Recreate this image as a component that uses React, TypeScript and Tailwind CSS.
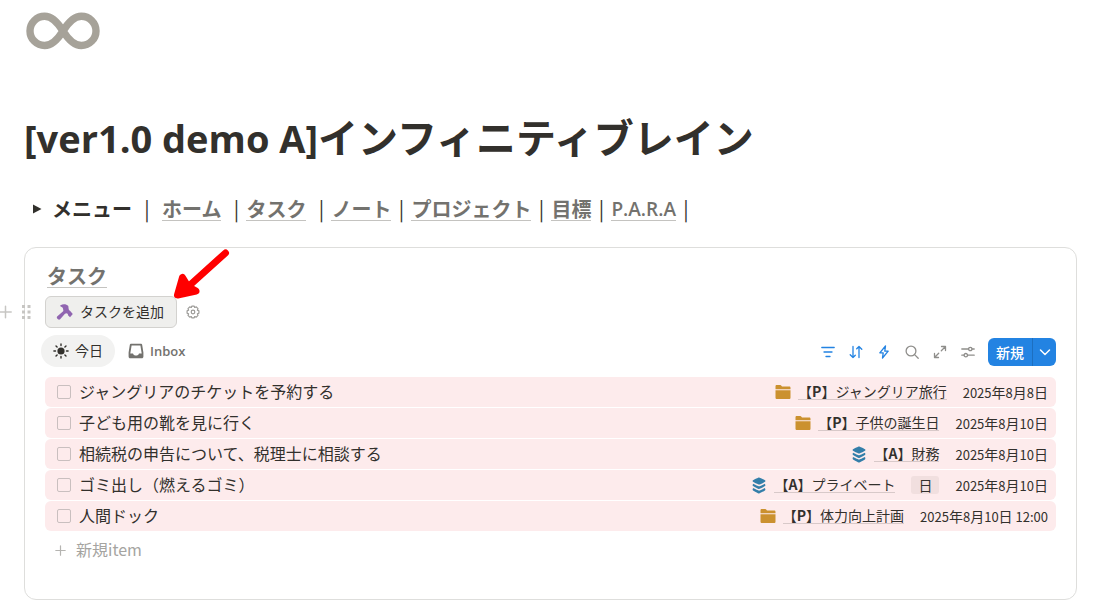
import React from "react";

type Kind = "project" | "area";

interface Task {
  id: string;
  title: string;
  kind: Kind;
  relation: string;
  tag?: string;
  date: string;
}

const TASKS: Task[] = [
  { id: "t1", title: "ジャングリアのチケットを予約する", kind: "project", relation: "ジャングリア旅行", date: "2025年8月8日" },
  { id: "t2", title: "子ども用の靴を見に行く", kind: "project", relation: "子供の誕生日", date: "2025年8月10日" },
  { id: "t3", title: "相続税の申告について、税理士に相談する", kind: "area", relation: "財務", date: "2025年8月10日" },
  { id: "t4", title: "ゴミ出し（燃えるゴミ）", kind: "area", relation: "プライベート", tag: "日", date: "2025年8月10日" },
  { id: "t5", title: "人間ドック", kind: "project", relation: "体力向上計画", date: "2025年8月10日 12:00" },
];

function InfinityLogo() {
  return (
    <svg width="76" height="42" viewBox="0 0 76 42" fill="none" stroke="#a6a299" strokeWidth="7.4" aria-hidden="true">
      <path d="M39 21C34 13 28.5 6.3 20.7 6.3A14.7 14.6 0 0 0 20.7 35.5C28.5 35.5 34 29 39 21C44 13 49.5 6.3 57.3 6.3A14.7 14.6 0 0 1 57.3 35.5C49.5 35.5 44 29 39 21Z" />
    </svg>
  );
}

function Hammer() {
  return (
    <svg width="18" height="18" viewBox="0 0 18 18" fill="#9065b0" aria-hidden="true">
      <path d="M4.6 2.2C7 .9 10.6 1.100 12.300 3L12.600 5.600C12.600 6.800 13.200 7.700 14.200 8L16.800 11L14 14.200L11.800 12L12 11L10.400 10.200L9 10.700L4.100 16.200C3.400 16.900 2.600 16.800 2 16.200L1.200 15.400C.6 14.700 .7 14 1.400 13.300L7.400 8L7 5.400C6.600 4.600 6 4.200 4.800 3.600C4.100 3.200 3.900 2.600 4.600 2.200Z" />
    </svg>
  );
}

function Gear() {
  return (
    <svg width="14" height="14" viewBox="0 0 14 14" fill="none" stroke="#9b9a97" strokeWidth="1.2" strokeLinejoin="round" aria-hidden="true">
      <path d="M5.8 1.1H8.2L8.7 2.5L10.3 1.9L12 3.6L11.4 5.2L12.9 5.8V8.2L11.4 8.8L12 10.4L10.3 12.1L8.7 11.5L8.2 12.9H5.8L5.3 11.5L3.7 12.1L2 10.4L2.6 8.8L1.1 8.2V5.8L2.6 5.2L2 3.6L3.7 1.9L5.3 2.5Z" />
      <circle cx="7" cy="7" r="1.8" />
    </svg>
  );
}

function Sun() {
  return (
    <svg width="16" height="16" viewBox="0 0 16 16" stroke="#32302c" strokeWidth="1.4" strokeLinecap="round" aria-hidden="true">
      <circle cx="8" cy="8" r="3.6" fill="#32302c" stroke="none" />
      <path d="M8 .9V2.5M8 13.5V15.1M.9 8H2.5M13.5 8H15.1M3 3L4.1 4.1M11.9 11.9L13 13M13 3L11.9 4.1M4.1 11.9L3 13" />
    </svg>
  );
}

function Inbox() {
  return (
    <svg width="16" height="16" viewBox="0 0 16 16" fill="#73726e" aria-hidden="true">
      <path
        fillRule="evenodd"
        d="M3.4 .8H12.6C13.5 .8 14.1 1.3 14.2 2.1L15.4 9.6V13.400C15.4 14.500 14.800 15.200 13.800 15.200H2.200C1.2 15.200 .6 14.500 .6 13.400V9.6L1.8 2.1C1.9 1.3 2.5 .8 3.400 .8ZM3.6 2.5L2.3 10.400H5C5.4 11.900 6.500 12.500 8 12.500S10.6 11.900 11 10.400H13.700L12.400 2.500Z"
      />
    </svg>
  );
}

function Folder() {
  return (
    <svg width="16" height="16" viewBox="0 0 16 16" fill="#cb912f" aria-hidden="true">
      <path d="M.5 5.2V2.4C.5 1.6 1 1.1 1.8 1.1H5.2C5.8 1.1 6 1.3 6.4 1.8L7 2.6H14.2C15 2.6 15.5 3.1 15.5 3.9V5.2Z" />
      <path d="M.5 6.2H15.5V13.4C15.5 14.4 15 15 14 15H2C1 15 .5 14.4.5 13.4Z" />
    </svg>
  );
}

function Layers() {
  return (
    <svg width="16" height="17" viewBox="0 0 16 17" fill="#337ea9" aria-hidden="true">
      <path d="M8 .5C8.4.5 13 2.5 14 3.2C14.5 3.6 14.5 4.4 14 4.800C13 5.500 8.5 7.600 8 7.600S3 5.500 2 4.800C1.5 4.4 1.5 3.600 2 3.200C3 2.5 7.6.5 8 .5Z" />
      <path d="M2.300 6.800C4 7.900 7.500 9.300 8 9.300S12 7.900 13.700 6.800C14.600 7.500 14.500 8.700 14 9.100C13 9.900 8.500 12.100 8 12.100S3 9.900 2 9.100C1.500 8.700 1.400 7.500 2.300 6.800Z" />
      <path d="M2.300 11.100C4 12.200 7.500 13.700 8 13.700S12 12.200 13.700 11.100C14.600 11.800 14.500 13 14 13.400C13 14.200 8.500 16.500 8 16.500S3 14.200 2 13.400C1.500 13 1.400 11.800 2.300 11.100Z" />
    </svg>
  );
}

function RedArrow() {
  return (
    <svg
      className="pointer-events-none absolute -top-[48px] left-[127px]"
      width="60"
      height="54"
      viewBox="0 0 60 54"
      stroke="#ff0000"
      strokeWidth="7"
      strokeLinecap="round"
      strokeLinejoin="round"
      fill="#ff0000"
      aria-hidden="true"
    >
      <path d="M53.500 5L18 37" />
      <path d="M10.500 29.500L5.500 47L24 43L16 38.500Z" />
    </svg>
  );
}

function Tool({ label, color, children }: { label: string; color: string; children: React.ReactNode }) {
  return (
    <button type="button" aria-label={label} className="flex size-7 items-center justify-center">
      <svg width="14" height="14" viewBox="0 0 14 14" fill="none" stroke={color} strokeWidth="1.3" strokeLinecap="round" strokeLinejoin="round" aria-hidden="true">
        {children}
      </svg>
    </button>
  );
}

function MenuLink({ children }: { children: React.ReactNode }) {
  return (
    <a href="#" className="inline-block border-b border-[#c4c3c0] leading-[22px] text-[#73726e]">
      {children}
    </a>
  );
}

const Bar = () => <span className="w-5 text-center font-normal">|</span>;

function DateText({ value }: { value: string }) {
  return (
    <time className="ml-4 whitespace-pre">
      {value.split(/([年月日])/).map((part, i) =>
        i % 2 === 1 ? (
          part
        ) : (
          <span key={i} className="text-[13px]">
            {part}
          </span>
        ),
      )}
    </time>
  );
}

function TaskRow({ task }: { task: Task }) {
  return (
    <li className="flex h-[30px] items-center rounded-md bg-[#fdebec] pr-2 pl-3">
      <input
        id={task.id}
        type="checkbox"
        className="size-[14px] shrink-0 appearance-none rounded-[2px] border border-[#c9bfbf] checked:bg-[#2383e2]"
      />
      <label htmlFor={task.id} className="ml-2 min-w-0 flex-1 truncate pb-0.5 text-base leading-6">
        {task.title}
      </label>
      <div className="flex shrink-0 items-center text-sm leading-5">
        {task.kind === "project" ? <Folder /> : <Layers />}
        <a href="#" className="mb-0.5 ml-[7px] border-b border-[#d8c9c9] leading-4">
          【<span className="font-bold">{task.kind === "project" ? "P" : "A"}</span>】{task.relation}
        </a>
        {task.tag && <span className="ml-4 rounded-[3px] bg-[#f1dfdf] px-[7px] leading-[18px]">{task.tag}</span>}
        <DateText value={task.date} />
      </div>
    </li>
  );
}

export default function App() {
  return (
    <main className="bg-white pt-[10px] pr-[31px] pb-1 pl-6 font-['Noto_Sans_CJK_JP',sans-serif] text-[#32302c]">
      <InfinityLogo />
      <h1 className="mt-[60px] text-[40px] leading-[48px] font-bold">
        <span className="font-['Open_Sans',sans-serif] text-[38px]">[ver1.0 demo A]</span>
        インフィニティブレイン
      </h1>

      <nav className="mt-8 flex h-[30px] items-center text-xl font-bold">
        <button type="button" aria-label="メニューを開く" className="mr-2 flex w-5 justify-center">
          <svg className="ml-[5px]" width="10" height="10" viewBox="0 0 10 10" fill="#32302c" aria-hidden="true">
            <path d="M1 .5L9.500 5L1 9.500Z" />
          </svg>
        </button>
        <span className="mr-[5px]">メニュー</span>
        <Bar />
        <span className="ml-[5px] flex items-center">
          <MenuLink>ホーム</MenuLink>
        </span>
        <span className="ml-[5px] flex items-center">
          <Bar />
          <MenuLink>タスク</MenuLink>
        </span>
        <span className="ml-[5px] flex items-center">
          <Bar />
          <MenuLink>ノート</MenuLink>
        </span>
        <Bar />
        <MenuLink>プロジェクト</MenuLink>
        <Bar />
        <MenuLink>目標</MenuLink>
        <Bar />
        <MenuLink>
          <span className="font-['Open_Sans',sans-serif] text-[19px] leading-[22px] font-semibold">P.A.R.A</span>
        </MenuLink>
        <Bar />
      </nav>

      <section className="mt-[23px] rounded-xl border border-[#dededc] px-5 pt-4 pb-[34px]">
        <h2 className="flex px-0.5 pt-px text-xl font-bold">
          <MenuLink>タスク</MenuLink>
        </h2>

        <div className="relative mt-2 flex items-center">
          <div className="absolute -left-[46px] flex items-center gap-[10px]">
            <button type="button" aria-label="ブロックを追加">
              <svg width="13" height="14" viewBox="0 0 13 14" stroke="#c7c6c3" strokeWidth="1.5" strokeLinecap="round" aria-hidden="true">
                <path d="M.8 7H12.200M6.500 1.300V12.700" />
              </svg>
            </button>
            <button type="button" aria-label="ブロックを移動">
              <svg width="9" height="14" viewBox="0 0 9 14" fill="#c7c6c3" aria-hidden="true">
                <path d="M0 0h3v3h-3zM5.500 0h3v3h-3zM0 5.500h3v3h-3zM5.500 5.500h3v3h-3zM0 11h3v3h-3zM5.500 11h3v3h-3z" />
              </svg>
            </button>
          </div>
          <button type="button" className="flex h-8 items-center gap-1.5 rounded-md border border-[#d3d2cf] bg-[#efefed] pr-3 pl-[10px] text-sm">
            <Hammer />
            <span className="pb-0.5">タスクを追加</span>
          </button>
          <button type="button" aria-label="ボタンを設定" className="ml-[9px]">
            <Gear />
          </button>
          <RedArrow />
        </div>

        <div className="mt-[7px] flex h-8 items-center justify-between">
          <div className="-ml-1 flex items-center text-sm">
            <button type="button" className="flex h-8 items-center gap-1.5 rounded-full bg-[#f2f2f1] px-3">
              <Sun />
              <span className="pb-0.5">今日</span>
            </button>
            <button type="button" className="ml-[13px] flex h-8 items-center gap-1.5 font-['Open_Sans','Noto_Sans_CJK_JP',sans-serif] text-[13px] font-semibold text-[#73726e]">
              <Inbox />
              Inbox
            </button>
          </div>
          <div className="mt-0.5 flex items-center">
            <Tool label="フィルター" color="#2383e2">
              <path d="M.8 2.500H13.200M3 7H11M5 11.500H9" />
            </Tool>
            <Tool label="並べ替え" color="#2383e2">
              <path d="M4 1.500V12.500M1.200 9.700L4 12.500L6.300 10.200M10 12.500V1.500M7.700 3.800L10 1.500L12.800 4.300" />
            </Tool>
            <Tool label="オートメーション" color="#2383e2">
              <path d="M8.500 1L2.800 7.800H6.200L5.500 13L11.200 6.200H7.800Z" />
            </Tool>
            <Tool label="検索" color="#8f8e8b">
              <circle cx="6" cy="6" r="4.900" />
              <path d="M9.600 9.600L13.200 13.200" />
            </Tool>
            <Tool label="全画面表示" color="#8f8e8b">
              <path d="M8.500 1.500H12.500V5.500M12.500 1.500L8.300 5.700M5.500 12.500H1.500V8.500M1.500 12.500L5.700 8.300" />
            </Tool>
            <Tool label="設定" color="#8f8e8b">
              <path d="M.8 4H7.500M11.100 4H13.200M.8 10.200H3M6.600 10.200H13.200" />
              <circle cx="9.300" cy="4" r="1.700" />
              <circle cx="4.800" cy="10.200" r="1.700" />
            </Tool>
            <div className="ml-1.5 flex h-7 overflow-hidden rounded-md bg-[#2383e2] text-sm text-white">
              <button type="button" className="px-2 font-medium">
                新規
              </button>
              <button type="button" aria-label="その他の作成方法" className="flex w-6 items-center justify-center border-l border-[#1d6fc0]">
                <svg width="12" height="12" viewBox="0 0 12 12" fill="none" stroke="#ffffff" strokeWidth="1.500" strokeLinecap="round" strokeLinejoin="round" aria-hidden="true">
                  <path d="M1.500 4L6 8.500L10.500 4" />
                </svg>
              </button>
            </div>
          </div>
        </div>

        <ul className="mt-[10px] flex flex-col gap-px">
          {TASKS.map((task) => (
            <TaskRow key={task.id} task={task} />
          ))}
        </ul>

        <button type="button" className="mt-1 flex h-[30px] items-center gap-[10px] pl-[10px] text-base text-[#a5a4a1]">
          <svg width="11" height="11" viewBox="0 0 11 11" stroke="#b5b4b1" strokeWidth="1.200" strokeLinecap="round" aria-hidden="true">
            <path d="M.8 5.500H10.200M5.500 .8V10.200" />
          </svg>
          <span className="pb-0.5">新規item</span>
        </button>
      </section>
    </main>
  );
}
